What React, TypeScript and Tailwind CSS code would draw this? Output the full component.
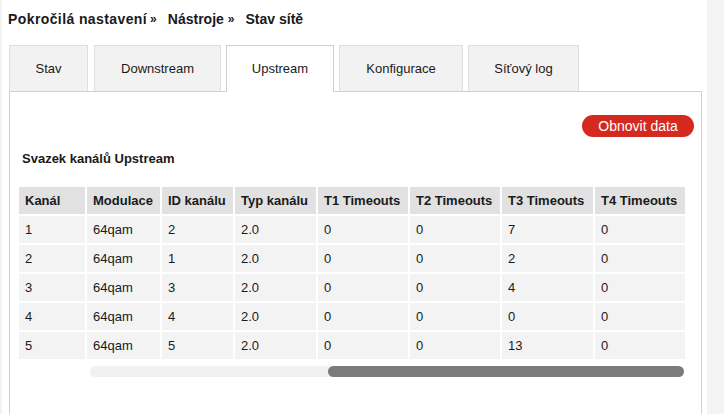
import React from "react";

const cols = [
  { label: "Kanál", w: "w-[66px]" },
  { label: "Modulace", w: "w-[73px]" },
  { label: "ID kanálu", w: "w-[71px]" },
  { label: "Typ kanálu", w: "w-[81px]" },
  { label: "T1 Timeouts", w: "w-[90px]" },
  { label: "T2 Timeouts", w: "w-[90px]" },
  { label: "T3 Timeouts", w: "w-[91px]" },
  { label: "T4 Timeouts", w: "w-[90px]" },
];

const rows = [
  ["1", "64qam", "2", "2.0", "0", "0", "7", "0"],
  ["2", "64qam", "1", "2.0", "0", "0", "2", "0"],
  ["3", "64qam", "3", "2.0", "0", "0", "4", "0"],
  ["4", "64qam", "4", "2.0", "0", "0", "0", "0"],
  ["5", "64qam", "5", "2.0", "0", "0", "13", "0"],
];

const tabs = [
  { label: "Stav", w: "w-[79px]" },
  { label: "Downstream", w: "w-[127px] ml-[1px]" },
  { label: "Upstream", w: "w-[108px]", active: true },
  { label: "Konfigurace", w: "w-[124px]" },
  { label: "Síťový log", w: "w-[111px]" },
];

export default function App() {
  return (
    <div
      className="w-[724px] h-[414px] overflow-hidden flex bg-white text-[#1a1a1a]"
      style={{ fontFamily: '"Liberation Sans", Arial, Helvetica, sans-serif' }}
    >
      <div className="w-[2px] bg-[#f3f3f3] shrink-0" />
      <div className="w-[705px] shrink-0 flex flex-col">
        <div className="h-[45px] pl-[6px] pt-[10px] flex items-start text-[14px] font-bold leading-[18px]">
          <span className="tracking-[0.4px]">Pokročilá nastavení</span>
          <span className="ml-[3px] text-[12px] leading-[18px]">»</span>
          <span className="ml-[11px]">Nástroje</span>
          <span className="ml-[4px] text-[12px] leading-[18px]">»</span>
          <span className="ml-[11px]">Stav sítě</span>
        </div>
        <div className="pl-[7px] flex gap-[5px] relative z-10">
          {tabs.map((t) => (
            <div
              key={t.label}
              className={
                t.active
                  ? `${t.w} h-[47px] -mb-px bg-white border border-[#d0d0d0] border-b-0 flex items-center justify-center text-[13px]`
                  : `${t.w} h-[46px] bg-[#f2f2f2] border border-[#dedede] border-b-0 flex items-center justify-center text-[13px]`
              }
            >
              {t.label}
            </div>
          ))}
        </div>
        <div className="ml-[7px] w-[693px] flex-1 border border-[#d0d0d0] border-b-0 flex flex-col">
          <div className="flex justify-end pr-[7px] pt-[23px]">
            <div className="w-[112px] h-[22px] rounded-full bg-[#d5291f] text-white text-[14px] flex items-center justify-center">
              Obnovit data
            </div>
          </div>
          <div className="pl-[12px] mt-[14px] text-[13px] font-bold leading-[16px]">
            Svazek kanálů Upstream
          </div>
          <table className="ml-[7px] mt-[18px] w-[670px] border-separate border-spacing-[2px] table-fixed text-[13px]">
            <colgroup>
              {cols.map((c) => (
                <col key={c.label} className={c.w} />
              ))}
            </colgroup>
            <thead>
              <tr>
                {cols.map((c) => (
                  <th
                    key={c.label}
                    className="h-[27px] p-0 pl-[6px] bg-[#e1e1e1] text-left font-bold whitespace-nowrap overflow-hidden"
                  >
                    {c.label}
                  </th>
                ))}
              </tr>
            </thead>
            <tbody>
              {rows.map((r, i) => (
                <tr key={i}>
                  {r.map((v, j) => (
                    <td
                      key={j}
                      className="h-[27px] p-0 pl-[6px] bg-[#f3f3f3] text-left font-normal"
                    >
                      {v}
                    </td>
                  ))}
                </tr>
              ))}
            </tbody>
          </table>
          <div className="ml-[80px] mt-[5px] w-[594px] h-[11px] rounded-full bg-[#f1f1f1] flex">
            <div className="ml-[238px] w-[356px] h-[11px] rounded-full bg-[#7b7b7b]" />
          </div>
        </div>
      </div>
      <div className="flex-1 bg-[#f3f3f3]" />
    </div>
  );
}
